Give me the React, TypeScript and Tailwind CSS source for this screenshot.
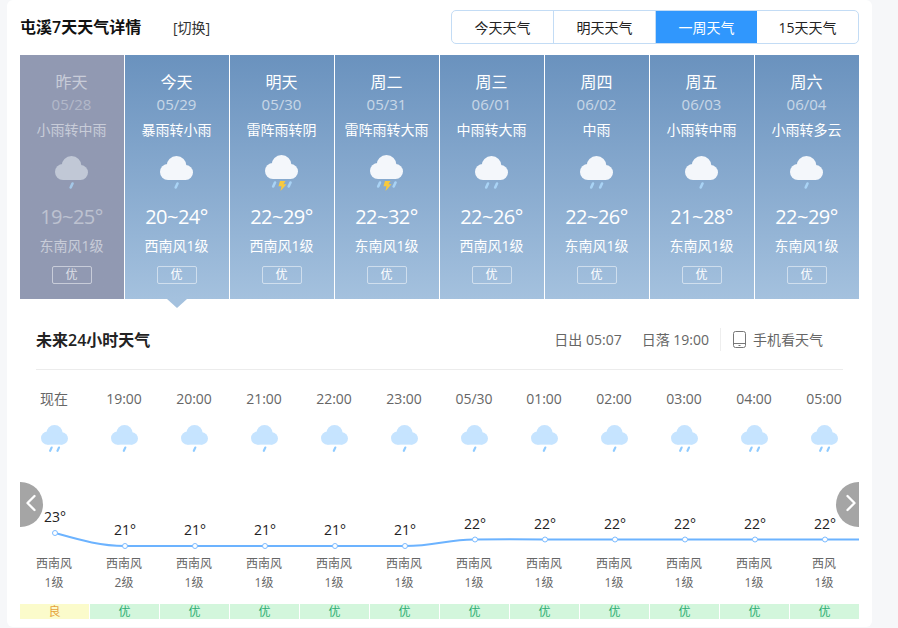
import { ChevronLeft, ChevronRight } from "lucide-react";

type Day = {
    name: string;
    date: string;
    weather: string;
    drops: number;
    bolt?: boolean;
    temp: string;
    wind: string;
};

type Hour = {
    time: string;
    drops: number;
    temp: number;
    wind: string;
    level: string;
    aqi: string;
};

const days: Day[] = [
    { name: "昨天", date: "05/28", weather: "小雨转中雨", drops: 1, temp: "19~25°", wind: "东南风1级" },
    { name: "今天", date: "05/29", weather: "暴雨转小雨", drops: 1, temp: "20~24°", wind: "西南风1级" },
    { name: "明天", date: "05/30", weather: "雷阵雨转阴", drops: 2, bolt: true, temp: "22~29°", wind: "西南风1级" },
    { name: "周二", date: "05/31", weather: "雷阵雨转大雨", drops: 2, bolt: true, temp: "22~32°", wind: "东南风1级" },
    { name: "周三", date: "06/01", weather: "中雨转大雨", drops: 2, temp: "22~26°", wind: "西南风1级" },
    { name: "周四", date: "06/02", weather: "中雨", drops: 2, temp: "22~26°", wind: "东南风1级" },
    { name: "周五", date: "06/03", weather: "小雨转中雨", drops: 1, temp: "21~28°", wind: "东南风1级" },
    { name: "周六", date: "06/04", weather: "小雨转多云", drops: 1, temp: "22~29°", wind: "东南风1级" },
];

const hours: Hour[] = [
    { time: "现在", drops: 2, temp: 23, wind: "西南风", level: "1级", aqi: "良" },
    { time: "19:00", drops: 1, temp: 21, wind: "西南风", level: "2级", aqi: "优" },
    { time: "20:00", drops: 1, temp: 21, wind: "西南风", level: "1级", aqi: "优" },
    { time: "21:00", drops: 1, temp: 21, wind: "西南风", level: "1级", aqi: "优" },
    { time: "22:00", drops: 1, temp: 21, wind: "西南风", level: "1级", aqi: "优" },
    { time: "23:00", drops: 1, temp: 21, wind: "西南风", level: "1级", aqi: "优" },
    { time: "05/30", drops: 1, temp: 22, wind: "西南风", level: "1级", aqi: "优" },
    { time: "01:00", drops: 1, temp: 22, wind: "西南风", level: "1级", aqi: "优" },
    { time: "02:00", drops: 1, temp: 22, wind: "西南风", level: "1级", aqi: "优" },
    { time: "03:00", drops: 2, temp: 22, wind: "西南风", level: "1级", aqi: "优" },
    { time: "04:00", drops: 2, temp: 22, wind: "西南风", level: "1级", aqi: "优" },
    { time: "05:00", drops: 2, temp: 22, wind: "西风", level: "1级", aqi: "优" },
];

const tabs = ["今天天气", "明天天气", "一周天气", "15天天气"];

const pointY: Record<number, number> = { 23: 51, 21: 64, 22: 57.5 };

function RainCloud({
    drops,
    bolt,
    cloud,
    rain,
    className,
}: {
    drops: number;
    bolt?: boolean;
    cloud: string;
    rain: string;
    className: string;
}) {
    const xs = bolt ? [9, 24.5] : drops === 2 ? [12, 21] : [16.5];
    return (
        <svg viewBox="0 0 33 33" className={`overflow-visible ${className}`}>
            <g fill={cloud}>
                <circle cx="16.5" cy="10" r="10" />
                <circle cx="8" cy="16" r="8" />
                <circle cx="25.5" cy="16.5" r="7.5" />
                <rect x="8" y="12" width="18" height="12" />
            </g>
            {xs.map((x) => (
                <line
                    key={x}
                    x1={x + 1}
                    y1="27.5"
                    x2={x - 0.8}
                    y2="31.5"
                    stroke={rain}
                    strokeWidth="2.6"
                    strokeLinecap="round"
                />
            ))}
            {bolt && <path d="M15 26h5.5l-2 3.2h3L15.5 36l1-4.8h-3z" fill="#f8c93e" />}
        </svg>
    );
}

function DayColumn({ day, past }: { day: Day; past: boolean }) {
    return (
        <div
            className={`flex h-[244px] flex-col items-center bg-linear-to-b pt-[17px] pr-px text-white ${
                past ? "from-[#9199b2] to-[#9199b2]" : "from-[#6a92be] to-[#a4c1de]"
            }`}
        >
            <div className={`h-[21px] text-[16px] leading-[21px] ${past ? "opacity-50" : ""}`}>{day.name}</div>
            <div className={`mt-px h-[20px] text-[15px] leading-[20px] ${past ? "opacity-30" : "opacity-60"}`}>
                {day.date}
            </div>
            <div className={`mt-[6px] h-[20px] text-[14px] leading-[20px] ${past ? "opacity-50" : ""}`}>
                {day.weather}
            </div>
            <RainCloud
                drops={day.drops}
                bolt={day.bolt}
                cloud={past ? "#cdd4df" : "#f4f7fb"}
                rain="#a9d3f5"
                className={`h-[33px] w-[33px] ${day.bolt ? "mt-[15px]" : "mt-[16px]"} ${past ? "opacity-80" : ""}`}
            />
            <div
                className={`h-[28px] text-[20px] leading-[28px] tracking-[-0.5px] ${day.bolt ? "mt-[15px]" : "mt-[14px]"} ${
                    past ? "opacity-40" : ""
                }`}
            >
                {day.temp}
            </div>
            <div className={`mt-[5px] h-[20px] text-[14px] leading-[20px] ${past ? "opacity-50" : ""}`}>{day.wind}</div>
            <div
                className={`mt-[10px] flex h-[18px] w-[40px] items-center justify-center rounded-[2px] border border-white/50 text-[12px] ${
                    past ? "text-white/70" : ""
                }`}
            >
                优
            </div>
        </div>
    );
}

function TempChart() {
    return (
        <div className="relative h-[72px] w-[839px] overflow-hidden">
            <svg viewBox="0 0 839 72" className="absolute top-0 left-0 h-[72px] w-[839px]">
                <path
                    d="M35 51C60 58 80 64 105 64L385 64C415 64 430 57 455 57.5C480 57 500 57 525 57.5L839 57.5"
                    fill="none"
                    stroke="#6cb3ff"
                    strokeWidth="2"
                />
                {hours.map((h, i) => (
                    <circle key={i} cx={35 + i * 70} cy={pointY[h.temp]} r="2.5" fill="#fff" stroke="#7dbcff" />
                ))}
            </svg>
            {hours.map((h, i) => (
                <div
                    key={i}
                    className="absolute w-[40px] text-center text-[14px] leading-[20px] text-[#222]"
                    style={{ left: 15 + i * 70, top: pointY[h.temp] - 26 }}
                >
                    {h.temp}°
                </div>
            ))}
            <div className="absolute top-0 left-0 flex h-[45px] w-[23px] items-center overflow-hidden rounded-r-full bg-[#a5a5a5] pb-[3px] text-white">
                <ChevronLeft size={28} strokeWidth={2} className="-ml-[3px] shrink-0" />
            </div>
            <div className="absolute top-0 right-0 flex h-[45px] w-[23px] items-center justify-end overflow-hidden rounded-l-full bg-[#a5a5a5] pb-[3px] text-white">
                <ChevronRight size={28} strokeWidth={2} className="-mr-[6px] shrink-0" />
            </div>
        </div>
    );
}

export default function App() {
    return (
        <div
            className="h-[628px] w-[898px] overflow-hidden bg-[#f6f7f9] pl-[7px] text-[#333]"
            style={{ fontFamily: '"Open Sans", "Noto Sans CJK SC", sans-serif' }}
        >
            <div className="h-[627px] w-[865px] rounded-[6px] bg-white px-[13px] pt-[10px]">
                {/* Cabecera */}
                <div className="flex h-[34px] items-center">
                    <div className="w-[153px] text-[16px] font-semibold text-[#111]">屯溪7天天气详情</div>
                    <div className="text-[14px] text-[#333]">[切换]</div>
                    <div className="ml-auto flex h-[34px] w-[408px] overflow-hidden rounded-[5px] border border-[#c3dcf5]">
                        {tabs.map((tab, i) => (
                            <div
                                key={tab}
                                className={`flex flex-1 items-center justify-center text-[14px] ${
                                    i === 2 ? "bg-[#3097fd] text-white" : "text-[#222]"
                                } ${i < 2 ? "border-r border-[#c3dcf5]" : ""}`}
                            >
                                {tab}
                            </div>
                        ))}
                    </div>
                </div>

                {/* Siete dias */}
                <div className="relative mt-[11px] grid w-[839px] grid-cols-[104px_repeat(7,104px)] gap-x-px">
                    {days.map((day, i) => (
                        <DayColumn key={day.date} day={day} past={i === 0} />
                    ))}
                    <div className="absolute top-[244px] left-[147px] h-0 w-0 border-x-[10px] border-t-[9px] border-x-transparent border-t-[#a4c1de]" />
                </div>

                {/* Proximas 24 horas */}
                <div className="mx-[16px] flex h-[71px] items-center border-b border-[#ececec] pt-[11px]">
                    <div className="text-[16px] font-semibold text-[#222]">未来24小时天气</div>
                    <div className="ml-auto flex items-center text-[14px] text-[#666]">
                        <span>日出 05:07</span>
                        <span className="ml-[20px]">日落 19:00</span>
                        <div className="mr-[12px] ml-[11px] h-[23px] w-px bg-[#eee]" />
                        <svg viewBox="0 0 13 17" className="h-[17px] w-[13px]" fill="none" stroke="#777">
                            <rect x="0.5" y="0.5" width="12" height="16" rx="2" />
                            <line x1="0.5" y1="12.5" x2="12.5" y2="12.5" />
                            <line x1="5.5" y1="14.5" x2="7.5" y2="14.5" />
                        </svg>
                        <span className="mr-[20px] ml-[7px]">手机看天气</span>
                    </div>
                </div>

                <div className="mt-[19px] -ml-px grid w-[840px] grid-cols-[repeat(12,70px)] overflow-hidden">
                    {hours.map((h) => (
                        <div key={h.time} className="flex flex-col items-center">
                            <div className="h-[20px] text-[14px] leading-[20px] text-[#666]">{h.time}</div>
                            <RainCloud
                                drops={h.drops}
                                cloud="#c6e4ff"
                                rain="#8fcbff"
                                className="mt-[16px] h-[27px] w-[27px]"
                            />
                        </div>
                    ))}
                </div>

                <div className="mt-[30px]">
                    <TempChart />
                </div>

                <div className="-ml-px grid w-[840px] grid-cols-[repeat(12,70px)] overflow-hidden">
                    {hours.map((h) => (
                        <div key={h.time} className="text-center text-[12px] leading-[19px] text-[#666]">
                            <div>{h.wind}</div>
                            <div>{h.level}</div>
                        </div>
                    ))}
                </div>

                <div className="mt-[12px] grid w-[839px] grid-cols-[repeat(12,70px)] overflow-hidden">
                    {hours.map((h) => (
                        <div
                            key={h.time}
                            className={`mr-px flex h-[15px] items-center justify-center text-[12px] ${
                                h.aqi === "良" ? "bg-[#fbfbcb] text-[#e6a23c]" : "bg-[#d3f6dc] text-[#2fae74]"
                            }`}
                        >
                            {h.aqi}
                        </div>
                    ))}
                </div>
            </div>
        </div>
    );
}
